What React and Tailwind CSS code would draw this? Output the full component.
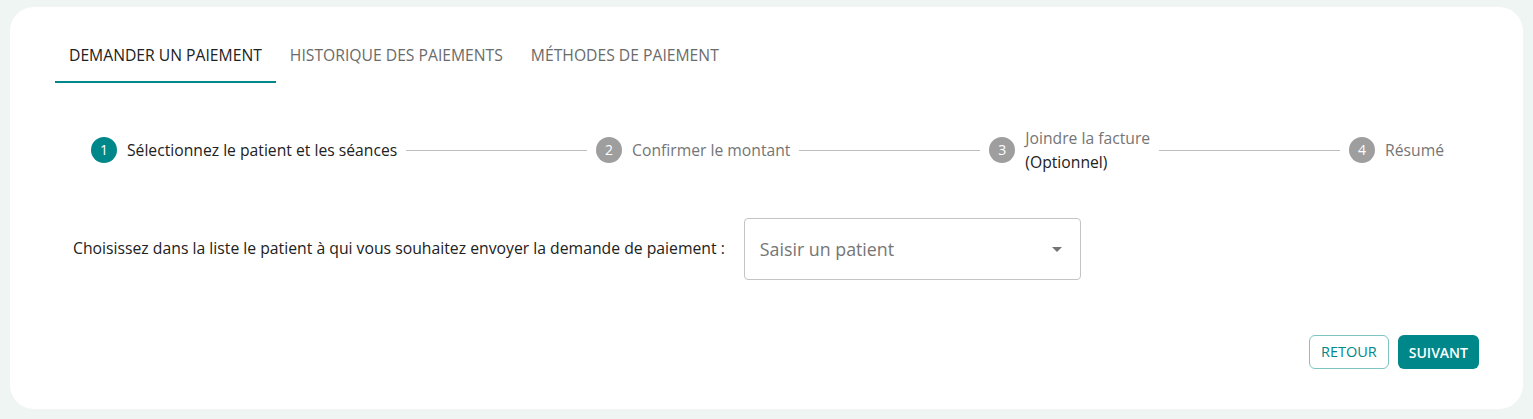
import React from 'react';

const teal = 'bg-[#00878a]';

const Step = ({ n, active, children }) => (
  <div className="flex items-center gap-[10px] shrink-0">
    <div
      className={
        'w-[26px] h-[26px] rounded-full flex items-center justify-center text-[14px] text-white ' +
        (active ? teal : 'bg-[#9e9e9e]')
      }
    >
      {n}
    </div>
    {children}
  </div>
);

const Line = () => <div className="flex-1 h-px bg-[#bdbdbd] mx-[9px]" />;

const App = () => {
  const tabs = ['DEMANDER UN PAIEMENT', 'HISTORIQUE DES PAIEMENTS', 'MÉTHODES DE PAIEMENT'];
  return (
    <div
      className="w-[1533px] h-[419px] bg-[#eef5f2] pt-[7px] pl-[10px] pr-[10px] pb-[10px]"
      style={{ fontFamily: '"Open Sans", sans-serif' }}
    >
      <div className="h-[402px] bg-white rounded-[24px] pt-[24px] pl-[45px] pr-[44px] flex flex-col">
        {/* Tabs */}
        <div className="flex">
          {tabs.map((t, i) => (
            <div
              key={t}
              className={
                'pt-[12px] pb-[14px] px-[14px] leading-[24px] text-[15.7px] border-b-2 ' +
                (i === 0 ? 'border-[#00878a] text-[#212121]' : 'border-transparent text-[#6b6b6b]')
              }
            >
              {t}
            </div>
          ))}
        </div>

        {/* Stepper */}
        <div className="flex items-center mt-[43px] pl-[36px] pr-[35px] text-[15.7px] leading-[24px]">
          <Step n="1" active>
            <span className="text-[#212121]">Sélectionnez le patient et les séances</span>
          </Step>
          <Line />
          <Step n="2">
            <span className="text-[#757575]">Confirmer le montant</span>
          </Step>
          <Line />
          <Step n="3">
            <div className="flex flex-col">
              <span className="text-[#757575]">Joindre la facture</span>
              <span className="text-[#212121]">(Optionnel)</span>
            </div>
          </Step>
          <Line />
          <Step n="4">
            <span className="text-[#757575]">Résumé</span>
          </Step>
        </div>

        {/* Patient select */}
        <div className="flex items-center mt-[44px] pl-[18px]">
          <span className="text-[15.75px] text-[#212121]">
            Choisissez dans la liste le patient à qui vous souhaitez envoyer la demande de paiement :
          </span>
          <div className="ml-[19px] w-[337px] h-[62px] border border-[#c4c4c4] rounded-[4px] flex items-center justify-between pl-[15px] pr-[18px]">
            <span className="text-[17.8px] text-[#757575]">Saisir un patient</span>
            <svg width="10" height="5" viewBox="0 0 10 5">
              <path d="M0 0 L10 0 L5 5 Z" fill="#757575" />
            </svg>
          </div>
        </div>

        {/* Actions */}
        <div className="flex justify-end gap-[9px] mt-[55px]">
          <button className="h-[34px] px-[11px] rounded-[6px] border border-[#80c3c4] text-[#00878a] text-[14.5px]">
            RETOUR
          </button>
          <button className={'h-[34px] px-[11px] rounded-[6px] text-white text-[14px] font-semibold ' + teal}>
            SUIVANT
          </button>
        </div>
      </div>
    </div>
  );
};

export default App;
